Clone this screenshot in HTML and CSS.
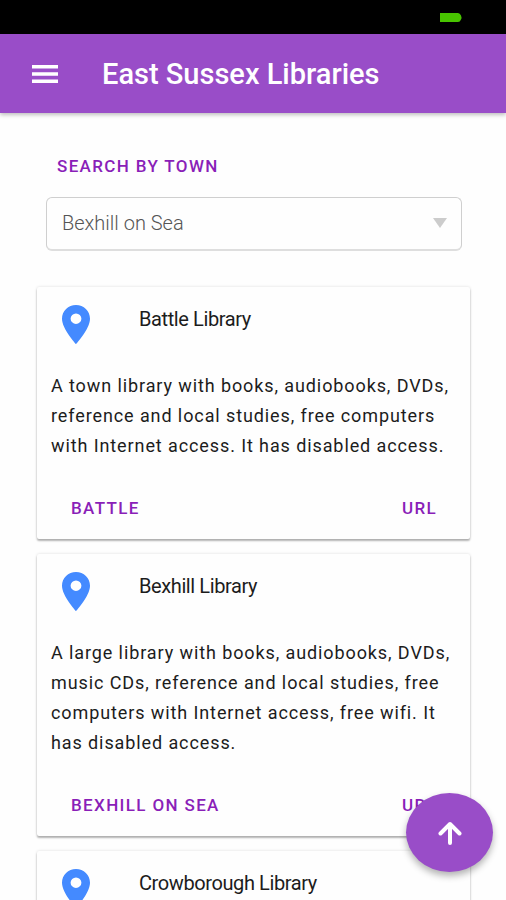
FILE: index.html
```html
<!DOCTYPE html>
<html lang="en">
<head>
  <meta charset="utf-8">
  <meta name="viewport" content="width=device-width, initial-scale=1">
  <title>East Sussex Libraries</title>
  <link rel="stylesheet" href="styles.css">
</head>
<body>
  <div class="status-bar">
    <svg class="battery" viewBox="0 0 22 9" aria-hidden="true"><path d="M0 0H18Q20 0 21 2.500Q22 4.500 21 6.500Q20 9 18 9H0Z"/></svg>
  </div>
  <header class="app-bar">
    <button class="menu-button" type="button" aria-label="Menu">
      <svg class="menu-icon" viewBox="0 0 26 18" aria-hidden="true"><path d="M0 0H26V3.500H0ZM0 7.250H26V10.750H0ZM0 14.500H26V18H0Z"/></svg>
    </button>
    <h1 class="app-title">East Sussex Libraries</h1>
  </header>
  <main class="content">
    <div class="search">
      <label class="search-label" for="town">SEARCH BY TOWN</label>
      <div class="select-box">
        <select class="town-select" id="town">
          <option>Battle</option>
          <option selected>Bexhill on Sea</option>
          <option>Crowborough</option>
        </select>
        <svg class="caret" viewBox="0 0 14 10" aria-hidden="true"><path d="M0 0H14L7 10Z"/></svg>
      </div>
    </div>
    <div class="cards">
      <article class="card">
        <div class="card-head">
          <svg class="pin" viewBox="5 2 14 20" preserveAspectRatio="none" aria-hidden="true"><path d="M12 2C8.130 2 5 5.130 5 9c0 5.250 7 13 7 13s7-7.750 7-13c0-3.870-3.130-7-7-7zm0 9.700a2.700 2.700 0 1 1 0-5.400 2.700 2.700 0 0 1 0 5.400z"/></svg>
          <h2 class="card-title">Battle Library</h2>
        </div>
        <p class="card-text">A town library with books, audiobooks, DVDs, reference and local studies, free computers with Internet access. It has disabled access.</p>
        <div class="card-actions"><a class="action" href="#battle">BATTLE</a><a class="action" href="#battle-url">URL</a></div>
      </article>
      <article class="card">
        <div class="card-head">
          <svg class="pin" viewBox="5 2 14 20" preserveAspectRatio="none" aria-hidden="true"><path d="M12 2C8.130 2 5 5.130 5 9c0 5.250 7 13 7 13s7-7.750 7-13c0-3.870-3.130-7-7-7zm0 9.700a2.700 2.700 0 1 1 0-5.400 2.700 2.700 0 0 1 0 5.400z"/></svg>
          <h2 class="card-title">Bexhill Library</h2>
        </div>
        <p class="card-text">A large library with books, audiobooks, DVDs, music CDs, reference and local studies, free computers with Internet access, free wifi. It has disabled access.</p>
        <div class="card-actions"><a class="action" href="#bexhill">BEXHILL ON SEA</a><a class="action" href="#bexhill-url">URL</a></div>
      </article>
      <article class="card">
        <div class="card-head">
          <svg class="pin" viewBox="5 2 14 20" preserveAspectRatio="none" aria-hidden="true"><path d="M12 2C8.130 2 5 5.130 5 9c0 5.250 7 13 7 13s7-7.750 7-13c0-3.870-3.130-7-7-7zm0 9.700a2.700 2.700 0 1 1 0-5.400 2.700 2.700 0 0 1 0 5.400z"/></svg>
          <h2 class="card-title">Crowborough Library</h2>
        </div>
      </article>
    </div>
  </main>
  <button class="fab" type="button" aria-label="Back to top">
    <svg class="fab-icon" viewBox="0 0 24 24" aria-hidden="true"><path d="M12 22V3M2.500 12.500L12 3L21.500 12.500"/></svg>
  </button>
</body>
</html>
```
FILE: styles.css
```css
* {
  box-sizing: border-box;
}

html {
  height: 100%;
  overflow: hidden;
}

body {
  height: 100%;
  margin: 0;
  overflow: hidden;
  display: flex;
  flex-direction: column;
  background: #fefefe;
  color: #1c1c1c;
  font-family: Roboto, "Liberation Sans", sans-serif;
}

.status-bar {
  flex: none;
  display: flex;
  justify-content: flex-end;
  height: 34px;
  padding: 13px 44px 0;
  background: #000;
}

.battery {
  width: 22px;
  height: 9px;
  fill: #48c400;
}

.app-bar {
  flex: none;
  display: flex;
  align-items: center;
  gap: 32px;
  height: 79px;
  padding: 0 20px;
  background: #994dc8;
  box-shadow: 0 2px 4px rgba(0, 0, 0, 0.25);
  color: #fff;
}

.menu-button {
  display: flex;
  padding: 12px;
  border: 0;
  background: none;
}

.menu-icon {
  width: 26px;
  height: 18px;
  fill: #fff;
}

.app-title {
  margin: 0;
  font-size: 29px;
  font-weight: 500;
}

.content {
  flex: 1;
  min-height: 0;
  overflow: hidden;
  padding: 43px 36px 0 37px;
}

.search {
  padding: 0 8px 0 9px;
}

.search-label,
.action {
  color: #8a1fb8;
  font-size: 17px;
  font-weight: 500;
  line-height: 20px;
  letter-spacing: 0.08em;
  text-decoration: none;
}

.search-label {
  display: block;
  padding-left: 11px;
}

.select-box {
  position: relative;
  margin-top: 21px;
}

.town-select {
  display: block;
  width: 100%;
  height: 54px;
  padding: 0 40px 2px 15px;
  border: 1px solid #cfcfcf;
  border-bottom: 2px solid #dedede;
  border-radius: 6px;
  appearance: none;
  background: #fefefe;
  color: #555;
  font-family: inherit;
  font-size: 20px;
  font-weight: 300;
}

.caret {
  position: absolute;
  top: 21px;
  right: 15px;
  width: 14px;
  height: 10px;
  fill: #ccc;
  pointer-events: none;
}

.cards {
  display: flex;
  flex-direction: column;
  gap: 15px;
  margin-top: 36px;
}

.card {
  border-radius: 2px;
  background: #fefefe;
  box-shadow: 0 2px 2px rgba(0, 0, 0, 0.28), 0 0 3px rgba(0, 0, 0, 0.14);
}

.card-head {
  display: flex;
  gap: 49px;
  height: 84px;
  padding: 18px 25px 0;
}

.pin {
  flex: none;
  width: 28px;
  height: 39px;
  fill: #448aff;
}

.card-title {
  margin: 0;
  font-size: 20px;
  font-weight: 400;
  line-height: 28px;
  letter-spacing: -0.02em;
}

.card-text {
  margin: 0;
  padding: 0 13px 0 14px;
  font-size: 18px;
  line-height: 30px;
  letter-spacing: 0.05em;
}

.card-actions {
  display: flex;
  justify-content: space-between;
  padding: 37px 33px 21px 34px;
}

.fab {
  position: fixed;
  right: 13px;
  bottom: 28px;
  display: flex;
  align-items: center;
  justify-content: center;
  width: 87px;
  height: 79px;
  padding: 0;
  border: 0;
  border-radius: 50%;
  background: #994dc8;
  box-shadow: 0 4px 7px rgba(0, 0, 0, 0.3);
}

.fab-icon {
  width: 24px;
  height: 26px;
  fill: none;
  stroke: #fff;
  stroke-width: 4;
  stroke-linecap: round;
  stroke-linejoin: round;
}
```
